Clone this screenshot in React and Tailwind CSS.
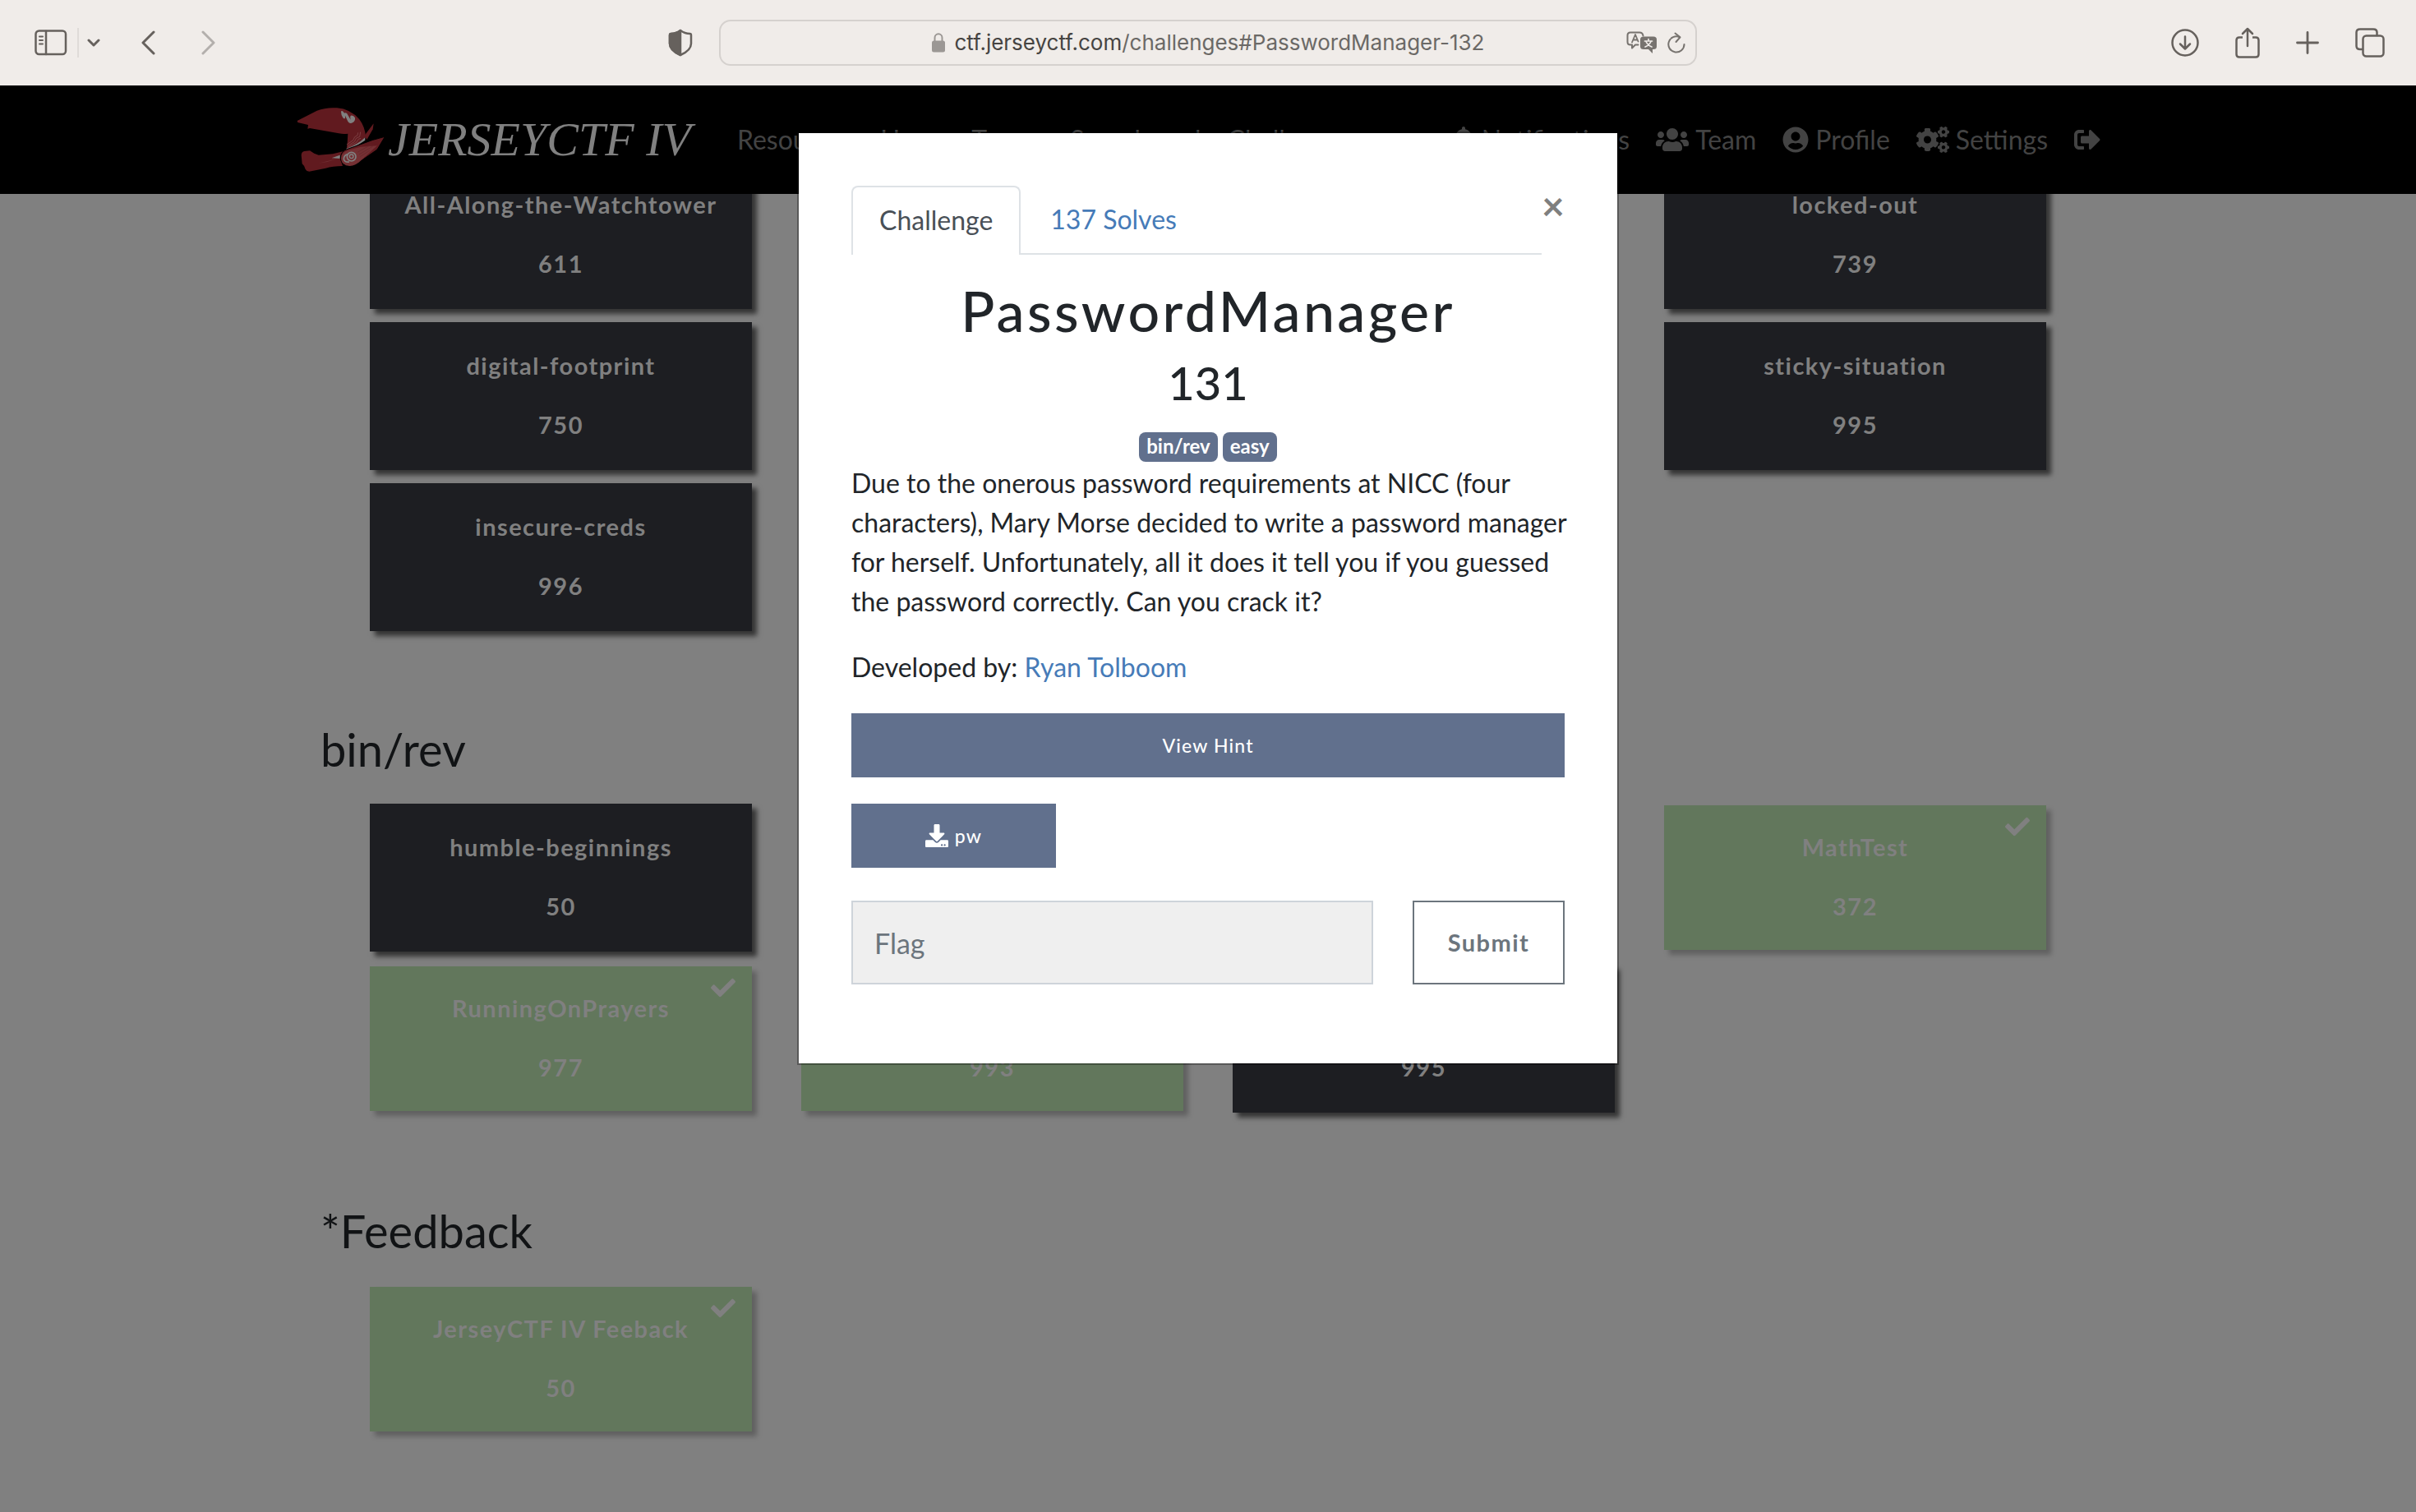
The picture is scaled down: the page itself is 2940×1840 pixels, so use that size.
import React from "react";
import {
  FaBell,
  FaUsers,
  FaUserCircle,
  FaCogs,
  FaSignOutAlt,
  FaDownload,
  FaCheck,
} from "react-icons/fa";

const stroke = {
  fill: "none",
  stroke: "currentColor",
  strokeLinecap: "round",
  strokeLinejoin: "round",
};

function SidebarIcon() {
  return (
    <svg width="40" height="32" viewBox="0 0 40 32" {...stroke} strokeWidth="2.5">
      <rect x="1.5" y="1.5" width="36.5" height="28.5" rx="4" />
      <path d="M14 2v28" />
      <path d="M6 8.5h4M6 13h4M6 17.5h4" strokeWidth="2" />
    </svg>
  );
}

function ShieldIcon() {
  return (
    <svg width="30" height="34" viewBox="0 0 30 34" {...stroke} strokeWidth="2.5">
      <path d="M15 2 C11 5 7 6 3.500 6 Q2 6 2 8 V18 C2 25 8 29 15 32 C22 29 28 25 28 18 V8 Q28 6 26.500 6 C23 6 19 5 15 2 Z" />
      <path d="M15 2 C11 5 7 6 3.500 6 Q2 6 2 8 V18 C2 25 8 29 15 32 Z" fill="currentColor" />
    </svg>
  );
}

function LockIcon() {
  return (
    <svg width="16" height="24" viewBox="0 0 16 24">
      <rect x="0" y="9.500" width="16" height="14" rx="2.500" fill="currentColor" />
      <path d="M3.500 10V6a4.500 4.700 0 0 1 9 0v4" fill="none" stroke="currentColor" strokeWidth="2" />
    </svg>
  );
}

function TranslateIcon() {
  return (
    <svg width="38" height="28" viewBox="0 0 38 28" {...stroke} strokeWidth="2">
      <path d="M14.500 16.500 L11 16.500 L7 20.500 V16.500 H5 Q1.500 16.500 1.500 13 V5 Q1.500 1.500 5 1.500 H16 Q20 1.500 20.500 5.500" />
      <path d="M7 13.500 L11 4 L14.500 12.500 M8.500 10.500 H13.500" strokeWidth="1.800" />
      <path d="M21 6.500 H33 Q37 6.500 37 10 V18.500 Q37 22 33 22 H32 V27 L27 22 H21 Q17 22 17 18.500 V10 Q17 6.500 21 6.500 Z" fill="currentColor" stroke="none" />
      <path d="M22.500 12 H31.500 M27 9.500 V12 M30 12.500 Q28 17 23 19 M24 12.500 Q26 17 31 19" stroke="#f0ece9" strokeWidth="1.700" />
    </svg>
  );
}

function ReloadIcon() {
  return (
    <svg width="22" height="26" viewBox="0 0 22 26" {...stroke} strokeWidth="2">
      <path d="M20.500 15 A9.600 9.600 0 1 1 15 6.300" />
      <path d="M9.500 1.500 L15.500 6.300 L10.500 12" />
    </svg>
  );
}

function DownloadCircleIcon() {
  return (
    <svg width="34" height="34" viewBox="0 0 34 34" {...stroke} strokeWidth="2.500">
      <circle cx="17" cy="17" r="15.500" />
      <path d="M17 9.500V24M11 18.500l6 6 6-6" />
    </svg>
  );
}

function ShareIcon() {
  return (
    <svg width="30" height="38" viewBox="0 0 30 38" {...stroke} strokeWidth="2.500">
      <path d="M9 12.500H5Q1.500 12.500 1.500 16V33Q1.500 36.500 5 36.500H25Q28.500 36.500 28.500 33V16Q28.500 12.500 25 12.500H21" strokeLinecap="butt" />
      <path d="M15 23V2M9 8l6-6 6 6" />
    </svg>
  );
}

function PlusIcon() {
  return (
    <svg width="28" height="28" viewBox="0 0 28 28" {...stroke} strokeWidth="2.800">
      <path d="M14 1.500V26.500M1.500 14H26.500" />
    </svg>
  );
}

function TabsIcon() {
  return (
    <svg width="36" height="36" viewBox="0 0 36 36" {...stroke} strokeWidth="2.500">
      <path d="M9 26H6Q1.500 26 1.500 22V5.500Q1.500 1.500 6 1.500H22Q26.500 1.500 26.500 5.500V9" />
      <rect x="9.500" y="9.500" width="25" height="25" rx="4" />
    </svg>
  );
}

function Chevron({ dir, className }) {
  return (
    <svg width="17" height="30" viewBox="0 0 17 30" {...stroke} strokeWidth="3" className={className}>
      <path d={dir === "left" ? "M15 2L2 15L15 28" : "M2 2L15 15L2 28"} />
    </svg>
  );
}

function Helmet() {
  return (
    <svg width="110" height="80" viewBox="15 30 330 240" aria-hidden="true" className="shrink-0">
      <path d="M266 134 L299 91 L296 112 L274 150 Z" fill="#611a1f" />
      <path d="M20 81 L92 44 Q125 31 165 34 Q215 38 247 76 Q268 104 270 140 L262 155 L200 187 Q204 160 205 128 Q190 131 172 127 L66 108 L58 110 L60 96 L22 87 Z" fill="#611a1f" />
      <path d="M35 206 Q36 194 46 192 L66 190 L82 200 L98 206 L150 202 L190 192 L175 214 L186 246 Q150 246 124 254 L64 266 Q54 266 50 258 Q48 246 38 238 Z" fill="#611a1f" />
      <path d="M200 182 Q238 170 268 142 L268 152 Q240 172 198 190 Z" fill="#808080" />
      <path d="M146 217 L176 206 L176 219 Z" fill="#808080" />
      <path d="M340 139 L296 151 L204 184 Q178 192 178 218 Q182 246 212 246 Q232 244 246 232 L312 186 Z" fill="#611a1f" stroke="#000" strokeWidth="3" />
      <path d="M252 176 L312 172 L246 232 Q232 244 212 246 Q182 244 180 218 Q182 196 206 188 Z" fill="#743033" />
      <circle cx="218" cy="212" r="16" fill="none" stroke="#808080" strokeWidth="5" />
      <circle cx="218" cy="211" r="7" fill="none" stroke="#808080" strokeWidth="4" />
      <path d="M206 203 Q190 206 190 221 Q194 234 210 231" fill="none" stroke="#808080" strokeWidth="5" />
      <path d="M180 48 Q181 43 186 46 Q197 56 195 71 Q192 76 187 70 Q180 60 180 48 Z M191 54 Q196 49 202 55 L215 77 Q212 64 216 62 Q225 60 231 70 Q233 82 222 88 Q211 93 205 83 Z" fill="#808080" />
      <path d="M201 168 L224 152 L230 140 L240 134 L242 124 M203 174 L229 157 L236 144 L248 139 L251 122 M205 178 L236 160 L244 148 L252 145" fill="none" stroke="#8a5154" strokeWidth="2" />
      <path d="M96 236 L168 219 L130 231 Z" fill="#702e32" />
      <path d="M240 196 L290 168 M246 204 L296 174 M250 212 L284 190" stroke="#62262a" strokeWidth="2" />
    </svg>
  );
}

function IconButton({ label, children }) {
  return (
    <button type="button" aria-label={label} className="flex items-center justify-center">
      {children}
    </button>
  );
}

function BrowserBar() {
  return (
    <header className="grid h-[104px] grid-cols-[1fr_1190px_1fr] items-center bg-[#f0ece9] text-[#66615d]">
      <div className="flex items-center pl-[42px] pr-8">
        <IconButton label="Show sidebar"><SidebarIcon /></IconButton>
        <span className="ml-3 h-9 w-[2px] bg-[#dfdbd8]" />
        <button type="button" aria-label="Tab groups" className="ml-[10px]">
          <svg width="16" height="10" viewBox="0 0 16 10" {...stroke} strokeWidth="3"><path d="M2 2l6 6 6-6" /></svg>
        </button>
        <div className="ml-[50px] flex gap-14">
          <IconButton label="Back"><Chevron dir="left" /></IconButton>
          <IconButton label="Forward"><Chevron dir="right" className="text-[#b3afac]" /></IconButton>
        </div>
        <div className="ml-auto flex">
          <IconButton label="Privacy report"><ShieldIcon /></IconButton>
        </div>
      </div>
      <div className="grid h-14 grid-cols-[1fr_auto_1fr] items-center rounded-[14px] border-2 border-[#d5d1ce] px-3">
        <span />
        <div className="flex items-center gap-3 font-['Inter',sans-serif] text-[26px] leading-8">
          <span className="text-[#9b9794]"><LockIcon /></span>
          <span className="text-[#6b6966]">
            <span className="text-[#464442]">ctf.jerseyctf.com</span>/challenges#PasswordManager-132
          </span>
        </div>
        <div className="flex items-center justify-end gap-3 text-[#77736f]">
          <IconButton label="Translate"><TranslateIcon /></IconButton>
          <IconButton label="Reload"><ReloadIcon /></IconButton>
        </div>
      </div>
      <div className="flex items-center justify-end gap-11 pr-[38px]">
        <IconButton label="Downloads"><DownloadCircleIcon /></IconButton>
        <IconButton label="Share"><ShareIcon /></IconButton>
        <IconButton label="New tab"><PlusIcon /></IconButton>
        <IconButton label="Tab overview"><TabsIcon /></IconButton>
      </div>
    </header>
  );
}

function NavLink({ label, children }) {
  return (
    <a href="#nav" aria-label={label} className="flex items-center gap-2">
      {children}
    </a>
  );
}

function SiteNav() {
  return (
    <nav className="relative z-10 h-[132px] bg-black">
      <div className="mx-auto flex h-full w-full max-w-[2220px] items-center text-[32px] leading-[48px] text-[#434343]">
        <a href="#home" className="flex items-center">
          <Helmet />
          <span className="ml-[2px] font-['Liberation_Serif',serif] text-[58px] italic leading-[64px] text-[#808080]">
            JERSEYCTF IV
          </span>
        </a>
        <div className="ml-14 flex gap-8">
          <NavLink>Resources</NavLink>
          <NavLink>Users</NavLink>
          <NavLink>Teams</NavLink>
          <NavLink>Scoreboard</NavLink>
          <NavLink>Challenges</NavLink>
        </div>
        <div className="ml-auto flex gap-8 pr-6">
          <NavLink><FaBell className="h-8 w-7" />Notifications</NavLink>
          <NavLink><FaUsers className="h-8 w-10" />Team</NavLink>
          <NavLink><FaUserCircle className="h-8 w-8" />Profile</NavLink>
          <NavLink><FaCogs className="h-8 w-10" />Settings</NavLink>
          <NavLink label="Logout"><FaSignOutAlt className="h-8 w-8" /></NavLink>
        </div>
      </div>
    </nav>
  );
}

function ChallengeCard({ name, points, solved }) {
  return (
    <button
      type="button"
      className={
        solved
          ? "relative my-[2px] flex h-[176px] flex-col items-center gap-[30px] bg-[#62775c] pt-[30px] text-[29px] font-bold leading-[42px] tracking-wider text-[#808080] shadow-[6px_6px_6px_rgba(0,0,0,0.25)]"
          : "relative flex h-[180px] flex-col items-center gap-[30px] bg-[#1d1e22] pt-8 text-[29px] font-bold leading-[42px] tracking-wider text-[#808080] shadow-[6px_6px_6px_rgba(0,0,0,0.6)]"
      }
    >
      {solved && <FaCheck className="absolute right-5 top-[11px] h-[30px] w-[30px]" />}
      <span className="min-h-[42px]">{name}</span>
      <span>{points}</span>
    </button>
  );
}

function CardGrid({ cards }) {
  return (
    <div className="grid grid-cols-4 gap-x-[60px] gap-y-4 px-[60px]">
      {cards.map((card, i) =>
        card ? <ChallengeCard key={i} {...card} /> : <span key={i} />
      )}
    </div>
  );
}

function Category({ title, cards }) {
  return (
    <section className="pt-[110px]">
      <h3 className="mb-8 text-[56px] leading-[68px] text-[#111315]">{title}</h3>
      <CardGrid cards={cards} />
    </section>
  );
}

const firstCards = [
  { name: "All-Along-the-Watchtower", points: 611 },
  null,
  null,
  { name: "locked-out", points: 739 },
  { name: "digital-footprint", points: 750 },
  null,
  null,
  { name: "sticky-situation", points: 995 },
  { name: "insecure-creds", points: 996 },
];

const binRevCards = [
  { name: "humble-beginnings", points: 50 },
  null,
  null,
  { name: "MathTest", points: 372, solved: true },
  { name: "RunningOnPrayers", points: 977, solved: true },
  { name: "", points: 993, solved: true },
  { name: "", points: 995 },
];

const feedbackCards = [{ name: "JerseyCTF IV Feeback", points: 50, solved: true }];

function ChallengeDialog() {
  return (
    <div
      role="dialog"
      aria-label="PasswordManager"
      className="absolute inset-x-0 top-[160px] z-20 mx-auto w-[1000px] border-2 border-black/30 bg-white bg-clip-padding px-16 pb-24 pt-16 text-[32px] leading-[48px] text-[#212529]"
    >
      <div className="flex items-start">
        <div role="tablist" className="flex flex-1 border-b-2 border-[#dee2e6]">
          <button
            type="button"
            role="tab"
            aria-selected="true"
            className="-mb-[2px] rounded-t-lg border-2 border-b-0 border-[#dee2e6] bg-white px-8 pb-[18px] pt-4 text-[#495057]"
          >
            Challenge
          </button>
          <button type="button" role="tab" aria-selected="false" className="px-9 text-[#467bb8]">
            137 Solves
          </button>
        </div>
        <button type="button" aria-label="Close" className="w-7 text-[48px] font-bold leading-[48px] text-[#7f7f7f]">
          ×
        </button>
      </div>

      <h2 className="mt-7 text-center text-[68px] font-medium leading-[80px] tracking-wider">PasswordManager</h2>
      <h3 className="mt-[14px] text-center text-[56px] font-medium leading-[68px]">131</h3>
      <div className="mt-[26px] flex justify-center gap-[6px] text-[24px] font-bold leading-7 text-white">
        <span className="rounded-lg bg-[#61708d] px-[9px] pb-[5px] pt-[3px]">bin/rev</span>
        <span className="rounded-lg bg-[#61708d] px-[9px] pb-[5px] pt-[3px]">easy</span>
      </div>
      <p className="-mr-2 mt-[2px]">
        Due to the onerous password requirements at NICC (four characters), Mary Morse decided to
        write a password manager for herself. Unfortunately, all it does it tell you if you guessed
        the password correctly. Can you crack it?
      </p>
      <p className="mt-8">
        Developed by: <a href="#author" className="text-[#467bb8]">Ryan Tolboom</a>
      </p>
      <button type="button" className="mt-8 h-[78px] w-full bg-[#61708d] text-[23px] font-medium leading-8 tracking-wider text-white">
        View Hint
      </button>
      <a
        href="#pw"
        className="mt-8 flex h-[78px] w-[249px] items-center justify-center gap-2 bg-[#61708d] text-[23px] font-medium leading-8 tracking-wider text-white"
      >
        <FaDownload className="h-7 w-7" />
        pw
      </a>
      <form className="mt-10 flex gap-12" onSubmit={(e) => e.preventDefault()}>
        <input
          type="text"
          aria-label="Flag"
          placeholder="Flag"
          className="h-[102px] min-w-0 flex-1 border-2 border-[#ced4da] bg-[#efefef] px-[26px] text-[34px] placeholder:text-[#6c757d]"
        />
        <button
          type="submit"
          className="h-[102px] w-[185px] border-2 border-[#6c757d] text-[29px] font-bold tracking-wider text-[#6c757d]"
        >
          Submit
        </button>
      </form>
    </div>
  );
}

export default function App() {
  return (
    <div className="relative min-h-screen bg-[#808080] font-['Lato',sans-serif]">
      <BrowserBar />
      <SiteNav />
      <main className="mx-auto -mt-10 w-full max-w-[2160px] pb-24">
        <CardGrid cards={firstCards} />
        <Category title="bin/rev" cards={binRevCards} />
        <Category title="*Feedback" cards={feedbackCards} />
      </main>
      <ChallengeDialog />
    </div>
  );
}
